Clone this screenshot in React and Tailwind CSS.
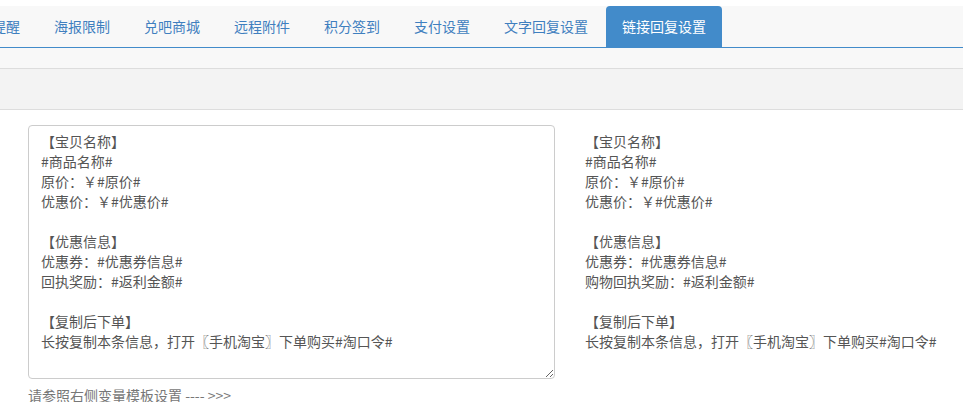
import React from 'react';

const tabs = ['消息提醒', '海报限制', '兑吧商城', '远程附件', '积分签到', '支付设置', '文字回复设置', '链接回复设置'];

const template = `【宝贝名称】
#商品名称#
原价：￥#原价#
优惠价：￥#优惠价#

【优惠信息】
优惠券：#优惠券信息#
回执奖励：#返利金额#

【复制后下单】
长按复制本条信息，打开〖手机淘宝〗下单购买#淘口令#`;

const preview = [
  '【宝贝名称】',
  '#商品名称#',
  '原价：￥#原价#',
  '优惠价：￥#优惠价#',
  '',
  '【优惠信息】',
  '优惠券：#优惠券信息#',
  '购物回执奖励：#返利金额#',
  '',
  '【复制后下单】',
  '长按复制本条信息，打开〖手机淘宝〗下单购买#淘口令#',
];

export default function App() {
  const font = { fontFamily: '"Noto Sans CJK SC", "Liberation Sans", sans-serif' };
  return (
    <div className="w-[963px] h-[402px] overflow-hidden bg-white pt-[6px]" style={font}>
      <div className="h-[42px] bg-[#f8f8f8] border-b border-[#428bca] overflow-hidden">
        <ul className="flex ml-[-52px] h-[41px]">
          {tabs.map((t, i) => {
            const active = i === tabs.length - 1;
            return (
              <li
                key={t}
                className={
                  'mr-[2px] px-[16px] h-[41px] flex items-center text-[14px] whitespace-nowrap rounded-t-[4px] ' +
                  (active ? 'bg-[#428bca] text-white' : 'text-[#3f7fbf]')
                }
              >
                {t}
              </li>
            );
          })}
        </ul>
      </div>
      <div className="h-[21px] bg-[#f8f8f8] border-b border-[#dddddd]" />
      <div className="h-[41px] bg-[#f3f3f3] border-b border-[#dddddd]" />
      <div className="flex pl-[28px] pt-[15px]">
        <div className="w-[527px]">
          <textarea
            className="block w-[527px] h-[254px] border border-[#cccccc] rounded-[4px] px-[12px] py-[5px] text-[14px] leading-[20px] text-[#555555] outline-none resize-y"
            style={font}
            defaultValue={template}
          />
          <p className="mt-[6px] text-[14px] leading-[20px] text-[#777777] whitespace-nowrap">请参照右侧变量模板设置 ---- &gt;&gt;&gt;</p>
        </div>
        <div className="ml-[30px] pt-[6px] text-[14px] leading-[20px] text-[#555555]">
          {preview.map((l, i) => (
            <div key={i} className="h-[20px] whitespace-nowrap">{l}</div>
          ))}
        </div>
      </div>
    </div>
  );
}
